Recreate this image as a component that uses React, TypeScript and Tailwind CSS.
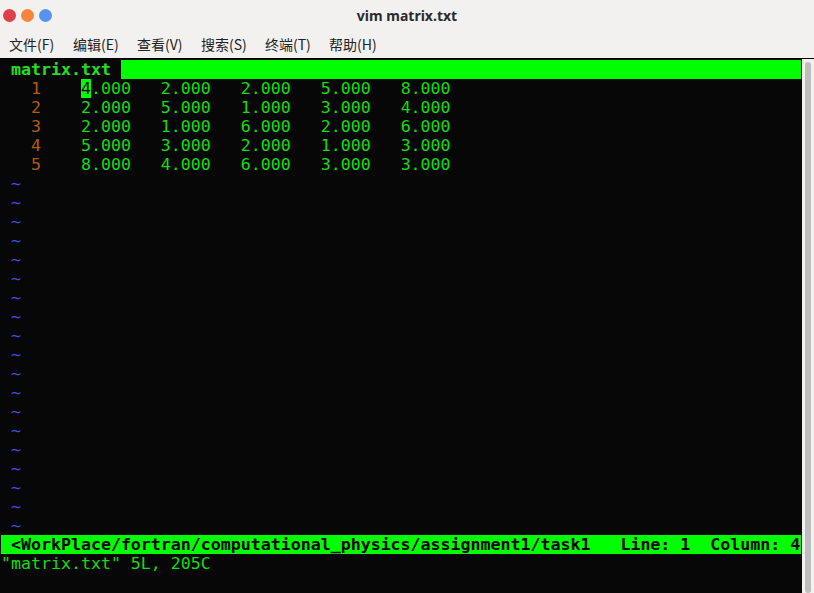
import React from "react";

const rows = [
  ["4.000", "2.000", "2.000", "5.000", "8.000"],
  ["2.000", "5.000", "1.000", "3.000", "4.000"],
  ["2.000", "1.000", "6.000", "2.000", "6.000"],
  ["5.000", "3.000", "2.000", "1.000", "3.000"],
  ["8.000", "4.000", "6.000", "3.000", "3.000"],
];

const menus = ["文件(F)", "编辑(E)", "查看(V)", "搜索(S)", "终端(T)", "帮助(H)"];

export default function App() {
  const mono = { fontFamily: '"DejaVu Sans Mono", monospace' };
  return (
    <div className="w-[814px] h-[593px] overflow-hidden bg-[#f2f1f0] flex flex-col">
      {/* title bar */}
      <div className="h-[30px] flex items-center relative shrink-0">
        <div className="flex gap-[5px] pl-[2px] pt-[1px]">
          <span className="w-[13px] h-[13px] rounded-full bg-[#de3f48] ml-[1px]" />
          <span className="w-[13px] h-[13px] rounded-full bg-[#f7853a]" />
          <span className="w-[13px] h-[13px] rounded-full bg-[#5a93ef]" />
        </div>
        <div
          className="absolute left-0 right-0 text-center text-[14px] font-bold text-[#2b2b2b]"
          style={{ fontFamily: '"Noto Sans", "Noto Sans CJK SC", sans-serif' }}
        >
          vim matrix.txt
        </div>
      </div>
      {/* menu bar */}
      <div
        className="h-[29px] flex items-center gap-[17px] pl-[9px] text-[14px] text-[#222] border-b border-black shrink-0"
        style={{ fontFamily: '"Noto Sans CJK SC", "Noto Sans", sans-serif' }}
      >
        {menus.map((m) => (
          <span key={m} className="w-[47px] whitespace-nowrap">{m}</span>
        ))}
      </div>
      {/* terminal + scrollbar */}
      <div className="flex flex-1 min-h-0">
        <div
          className="w-[802px] bg-[#070707] text-[16.6px] leading-[19px] pl-[1px] pt-[1px] whitespace-pre text-[#10dd10]"
          style={mono}
        >
          <div className="flex">
            <span className="font-bold text-[#22e022]"> matrix.txt </span>
            <span className="flex-1 bg-[#00ff00] mr-[1px]" />
          </div>
          {rows.map((r, i) => (
            <div key={i}>
              <span className="text-[#b05c0c]">{"   " + (i + 1)}</span>
              {"    "}
              {i === 0 ? (
                <>
                  <span className="bg-[#00ff00] text-black">4</span>
                  {".000   " + r.slice(1).join("   ")}
                </>
              ) : (
                r.join("   ")
              )}
            </div>
          ))}
          {Array.from({ length: 19 }).map((_, i) => (
            <div key={i} className="text-[#4b4bf0]">{" ~"}</div>
          ))}
          <div className="bg-[#00ff00] text-black font-bold w-[800px]">
            {" <WorkPlace/fortran/computational_physics/assignment1/task1   Line: 1  Column: 4"}
          </div>
          <div>"matrix.txt" 5L, 205C</div>
        </div>
        <div className="flex-1 bg-[#f2f1f0] flex justify-center pt-[3px]">
          <div className="w-[6px] h-full rounded-full bg-[#bdbdbd]" />
        </div>
      </div>
    </div>
  );
}
